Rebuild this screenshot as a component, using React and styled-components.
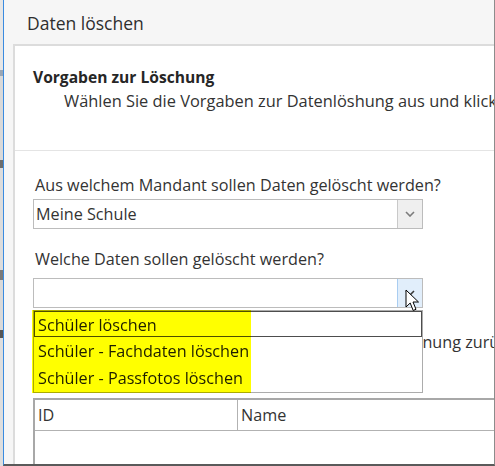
import React from "react";
import styled, { createGlobalStyle } from "styled-components";

const GlobalStyle = createGlobalStyle`
  html, body { margin: 0; padding: 0; background: #ffffff; }
  body { font-family: "Open Sans", "Noto Sans", sans-serif; color: #333333; }
  * { box-sizing: border-box; }
`;

const Screen = styled.div`
  width: 495px;
  height: 466px;
  display: flex;
  overflow: hidden;
`;

const Backdrop = styled.div`
  width: 3px;
  flex: none;
  background: linear-gradient(
    to bottom,
    #e6e6e6 0px, #e6e6e6 70px,
    #9aa6b4 70px, #9aa6b4 76px,
    #d9d9d9 76px, #d9d9d9 160px,
    #6d6d6d 160px, #6d6d6d 168px,
    #dcdcdc 168px, #dcdcdc 270px,
    #7a7a7a 270px, #7a7a7a 280px,
    #d9d9d9 280px, #d9d9d9 330px,
    #555555 330px, #555555 338px,
    #dedede 338px
  );
`;

const Window = styled.div`
  flex: 1;
  min-width: 0;
  display: flex;
  flex-direction: column;
  background: #f6f6f6;
  border-left: 1px solid #3a8be0;
  border-right: 1px solid #8c8c8c;
  border-bottom: 2px solid #5a5a5a;
  overflow: hidden;
`;

const TitleBar = styled.div`
  height: 44px;
  flex: none;
  display: flex;
  align-items: center;
  padding: 2px 0 0 23px;
  font-size: 17.5px;
  color: #2e2e2e;
`;

const Content = styled.div`
  flex: 1;
  min-height: 0;
  display: flex;
  padding-left: 9px;
`;

const Panel = styled.div`
  flex: 1;
  min-width: 0;
  display: flex;
  flex-direction: column;
  background: #ffffff;
  border-top: 2px solid #dcdcdc;
  border-left: 2px solid #dcdcdc;
`;

const Header = styled.div`
  height: 105px;
  flex: none;
  padding: 20px 0 0 18px;
  border-bottom: 1px solid #e4e4e4;
  overflow: hidden;
`;

const Heading = styled.div`
  font-size: 15.6px;
  font-weight: 700;
  line-height: 22px;
  color: #262626;
`;

const Subtitle = styled.div`
  margin: 2px 0 0 31px;
  font-size: 16.4px;
  line-height: 22px;
  white-space: nowrap;
`;

const Body = styled.div`
  flex: 1;
  min-height: 0;
  display: flex;
  flex-direction: column;
  padding: 23px 0 0 18px;
`;

const Label = styled.div`
  margin-top: ${(p) => p.$gap || 0}px;
  padding-left: 2px;
  font-size: 16.2px;
  line-height: 22px;
  white-space: nowrap;
`;

const ComboWrap = styled.div`
  position: relative;
  width: 390px;
  margin-top: ${(p) => p.$gap || 0}px;
  z-index: ${(p) => (p.$open ? 5 : 1)};
`;

const Combo = styled.div`
  height: 30px;
  display: flex;
  border: 1px solid #bcbcbc;
  background: #ffffff;
`;

const ComboValue = styled.div`
  flex: 1;
  padding-left: 2px;
  font-size: 16.2px;
  line-height: 28px;
  white-space: nowrap;
`;

const ArrowButton = styled.div`
  width: 25px;
  flex: none;
  display: flex;
  align-items: center;
  justify-content: center;
  border-left: 1px solid ${(p) => (p.$hover ? "#a9cdf1" : "#c9c9c9")};
  background: ${(p) => (p.$hover ? "#e1eefb" : "#efefef")};
`;

const DropList = styled.div`
  position: absolute;
  left: 0;
  top: calc(100% + 2px);
  width: 390px;
  border: 1px solid #acacac;
  background: #ffffff;
  display: flex;
  flex-direction: column;
  padding-bottom: 1px;
`;

const Item = styled.div`
  height: ${(p) => (p.$focused ? 26 : 27)}px;
  padding: 2px 0 0 ${(p) => (p.$focused ? 3 : 4)}px;
  font-size: 16.2px;
  line-height: ${(p) => (p.$focused ? 22 : 25)}px;
  white-space: nowrap;
  color: #1e1e1e;
  border: ${(p) => (p.$focused ? "1px solid #4d4d4d" : "none")};
`;

const Highlight = styled.div`
  position: absolute;
  left: -2px;
  top: -1px;
  width: 219px;
  height: 83px;
  background: #ffff00;
  mix-blend-mode: multiply;
  pointer-events: none;
`;

const Cursor = styled.svg`
  position: absolute;
  left: 372px;
  top: 11px;
  width: 16px;
  height: 24px;
  z-index: 10;
`;

const BehindText = styled.div`
  margin-top: 23px;
  padding-left: 5px;
  font-size: 16.2px;
  line-height: 22px;
  white-space: nowrap;
`;

const Table = styled.div`
  flex: 1;
  margin-top: 45px;
  border-top: 2px solid #a8a8a8;
  border-left: 2px solid #a8a8a8;
  display: flex;
  flex-direction: column;
`;

const HeaderRow = styled.div`
  height: 31px;
  display: flex;
  border-bottom: 1px solid #b2b2b2;
`;

const HeaderCell = styled.div`
  width: ${(p) => (p.$w ? `${p.$w}px` : "auto")};
  flex: ${(p) => (p.$w ? "none" : 1)};
  padding-left: 3px;
  font-size: 16.2px;
  line-height: 31px;
  white-space: nowrap;
  border-right: ${(p) => (p.$w ? "1px solid #b2b2b2" : "none")};
`;

const Chevron = ({ color }) => (
  <svg width="10" height="6" viewBox="0 0 10 6">
    <polyline points="1,1 5,5 9,1" fill="none" stroke={color} strokeWidth="1.6" />
  </svg>
);

export default function App() {
  return (
    <>
      <GlobalStyle />
      <Screen>
        <Backdrop />
        <Window>
          <TitleBar>Daten löschen</TitleBar>
          <Content>
            <Panel>
              <Header>
                <Heading>Vorgaben zur Löschung</Heading>
                <Subtitle>
                  Wählen Sie die Vorgaben zur Datenlöshung aus und klicken Sie auf „Weiter“.
                </Subtitle>
              </Header>
              <Body>
                <Label>Aus welchem Mandant sollen Daten gelöscht werden?</Label>
                <ComboWrap $gap={3}>
                  <Combo>
                    <ComboValue>Meine Schule</ComboValue>
                    <ArrowButton>
                      <Chevron color="#7c7c7c" />
                    </ArrowButton>
                  </Combo>
                </ComboWrap>
                <Label $gap={19}>Welche Daten sollen gelöscht werden?</Label>
                <ComboWrap $gap={8} $open>
                  <Combo>
                    <ComboValue />
                    <ArrowButton $hover>
                      <Chevron color="#3a3a3a" />
                    </ArrowButton>
                  </Combo>
                  <Cursor viewBox="0 0 16 24">
                    <path
                      d="M1 1 L1 18 L5.2 14 L8.2 21.5 L11 20.3 L8 13 L13.5 13 Z"
                      fill="#ffffff"
                      stroke="#000000"
                      strokeWidth="1"
                    />
                  </Cursor>
                  <DropList>
                    <Item $focused>Schüler löschen</Item>
                    <Item>Schüler - Fachdaten löschen</Item>
                    <Item>Schüler - Passfotos löschen</Item>
                    <Highlight />
                  </DropList>
                </ComboWrap>
                <BehindText>
                  Vor dem Löschen alle Datensätze der Schülerzuordnung zurücksetzen
                </BehindText>
                <Table>
                  <HeaderRow>
                    <HeaderCell $w={203}>ID</HeaderCell>
                    <HeaderCell>Name</HeaderCell>
                  </HeaderRow>
                </Table>
              </Body>
            </Panel>
          </Content>
        </Window>
      </Screen>
    </>
  );
}
